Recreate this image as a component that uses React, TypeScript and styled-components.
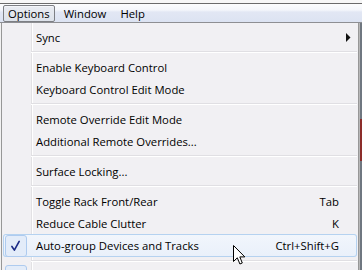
import React from 'react'
import styled, { createGlobalStyle, css } from 'styled-components'

type Entry =
  | { kind: 'item'; label: string; shortcut?: string; submenu?: boolean; checked?: boolean; active?: boolean }
  | { kind: 'sep' }

const entries: Entry[] = [
  { kind: 'item', label: 'Sync', submenu: true },
  { kind: 'sep' },
  { kind: 'item', label: 'Enable Keyboard Control' },
  { kind: 'item', label: 'Keyboard Control Edit Mode' },
  { kind: 'sep' },
  { kind: 'item', label: 'Remote Override Edit Mode' },
  { kind: 'item', label: 'Additional Remote Overrides...' },
  { kind: 'sep' },
  { kind: 'item', label: 'Surface Locking...' },
  { kind: 'sep' },
  { kind: 'item', label: 'Toggle Rack Front/Rear', shortcut: 'Tab' },
  { kind: 'item', label: 'Reduce Cable Clutter', shortcut: 'K' },
  { kind: 'item', label: 'Auto-group Devices and Tracks', shortcut: 'Ctrl+Shift+G', checked: true, active: true },
  { kind: 'sep' },
  { kind: 'item', label: 'Show Cables', checked: true },
]

const CheckMark = () => (
  <svg width="22" height="22" viewBox="0 0 22 22">
    <path d="M6.5 11.5 L9.2 15.5 L14.5 6" fill="none" stroke="#1b2a86" strokeWidth="1.8" strokeLinecap="round" strokeLinejoin="round" />
  </svg>
)

const SubmenuArrow = () => (
  <svg width="5" height="9" viewBox="0 0 5 9">
    <path d="M0 0 L4.5 4.5 L0 9 Z" fill="#111" />
  </svg>
)

const Pointer = () => (
  <svg width="13" height="21" viewBox="0 0 13 21">
    <path
      d="M0.5 0.5 L0.5 16.5 L4.3 12.8 L6.9 19 L9.3 18 L6.8 11.9 L11.8 11.9 Z"
      fill="#fff"
      stroke="#000"
      strokeWidth="1"
      strokeLinejoin="miter"
    />
  </svg>
)

const App: React.FunctionComponent = () => {
  return (
    <>
      <GlobalStyle />
      <Screen>
        <TopStrip />
        <MenuBar>
          <BarItem $pressed>Options</BarItem>
          <BarItem>Window</BarItem>
          <BarItem>Help</BarItem>
        </MenuBar>
        <Body>
          <Menu>
            {entries.map((e, i) =>
              e.kind === 'sep' ? (
                <Separator key={i} />
              ) : (
                <Row key={i} $active={!!e.active}>
                  <CheckCell>{e.checked && <CheckBox>{<CheckMark />}</CheckBox>}</CheckCell>
                  <Label>{e.label}</Label>
                  <Shortcut>{e.shortcut}</Shortcut>
                  <ArrowCell>{e.submenu && <SubmenuArrow />}</ArrowCell>
                  {e.active && (
                    <Cursor>
                      <Pointer />
                    </Cursor>
                  )}
                </Row>
              )
            )}
          </Menu>
          <Backdrop />
        </Body>
      </Screen>
    </>
  )
}

const GlobalStyle = createGlobalStyle`
  body {
    margin: 0;
    background: #f2f2f2;
    font-family: "Open Sans", "Noto Sans", sans-serif;
    font-size: 11.3px;
    color: #000;
  }
`

const Screen = styled('div')`
  width: 362px;
  height: 270px;
  overflow: hidden;
  display: flex;
  flex-direction: column;
`

const TopStrip = styled('div')`
  height: 3px;
  background: #f7f7f7;
  border-bottom: 1px solid #6b6b6b;
  flex-shrink: 0;
`

const MenuBar = styled('div')`
  height: 18px;
  flex-shrink: 0;
  display: flex;
  align-items: flex-start;
  gap: 4px;
  padding-left: 3px;
  background: linear-gradient(#fcfdfe 0, #f4f6fb 6px, #e2e7f4 8px, #dce3f2 18px);
  border-bottom: 1px solid #8e8f93;
`

const BarItem = styled('span')<{ $pressed?: boolean }>`
  box-sizing: border-box;
  height: 17px;
  margin-top: 1px;
  padding: 0 4px;
  line-height: 15px;
  border: 1px solid transparent;
  border-radius: 2px;
  user-select: none;
  ${(p) =>
    p.$pressed &&
    css`
      border-color: #7d7f84;
      background: linear-gradient(#e9ecf2, #dde2ea);
      box-shadow: inset 0 1px 0 rgba(255, 255, 255, 0.5);
    `}
`

const Body = styled('div')`
  flex: 1;
  display: flex;
`

const Menu = styled('div')`
  width: 358px;
  box-sizing: border-box;
  margin-left: 1px;
  padding: 3px 1px 0 1px;
  border-left: 1px solid #979797;
  border-right: 1px solid #979797;
  background:
    linear-gradient(to right, transparent 29px, #e2e1e4 29px, #e2e1e4 30px, #fff 30px, #fff 31px, transparent 31px),
    #f1f0f3;
  flex-shrink: 0;
`

const Backdrop = styled('div')`
  flex: 1;
  background: linear-gradient(
    #6f7780 0,
    #6f7780 96px,
    #8c2d2a 96px,
    #8c2d2a 138px,
    #6f7780 138px
  );
  border-left: 1px solid #b8b8b8;
`

const Row = styled('div')<{ $active: boolean }>`
  position: relative;
  height: 22px;
  display: grid;
  grid-template-columns: 28px 1fr auto 18px;
  align-items: center;
  border-radius: 3px;
  ${(p) =>
    p.$active &&
    css`
      height: 23px;
      background: linear-gradient(#f2f6fc, #e9f0fa);
      box-shadow: inset 0 0 0 1px #b5d2f0;
    `}
`

const CheckCell = styled('div')`
  height: 100%;
  display: flex;
  align-items: center;
  padding-left: 2px;
`

const CheckBox = styled('div')`
  width: 22px;
  height: 22px;
  box-sizing: border-box;
  border: 1px solid #aecbef;
  border-radius: 3px;
  background: #e3ecf9;
  display: flex;
  align-items: center;
  justify-content: center;
`

const Label = styled('span')`
  padding-left: 5px;
  white-space: nowrap;
`

const Shortcut = styled('span')`
  white-space: nowrap;
  text-align: right;
`

const ArrowCell = styled('div')`
  display: flex;
  align-items: center;
  justify-content: center;
  padding-left: 1px;
`

const Separator = styled('div')`
  height: 1px;
  margin: 3px 0 3px 28px;
  background: #e0dfe3;
  border-bottom: 1px solid #fff;
`

const Cursor = styled('div')`
  position: absolute;
  left: 230px;
  top: 11px;
  line-height: 0;
  pointer-events: none;
`

export default App
